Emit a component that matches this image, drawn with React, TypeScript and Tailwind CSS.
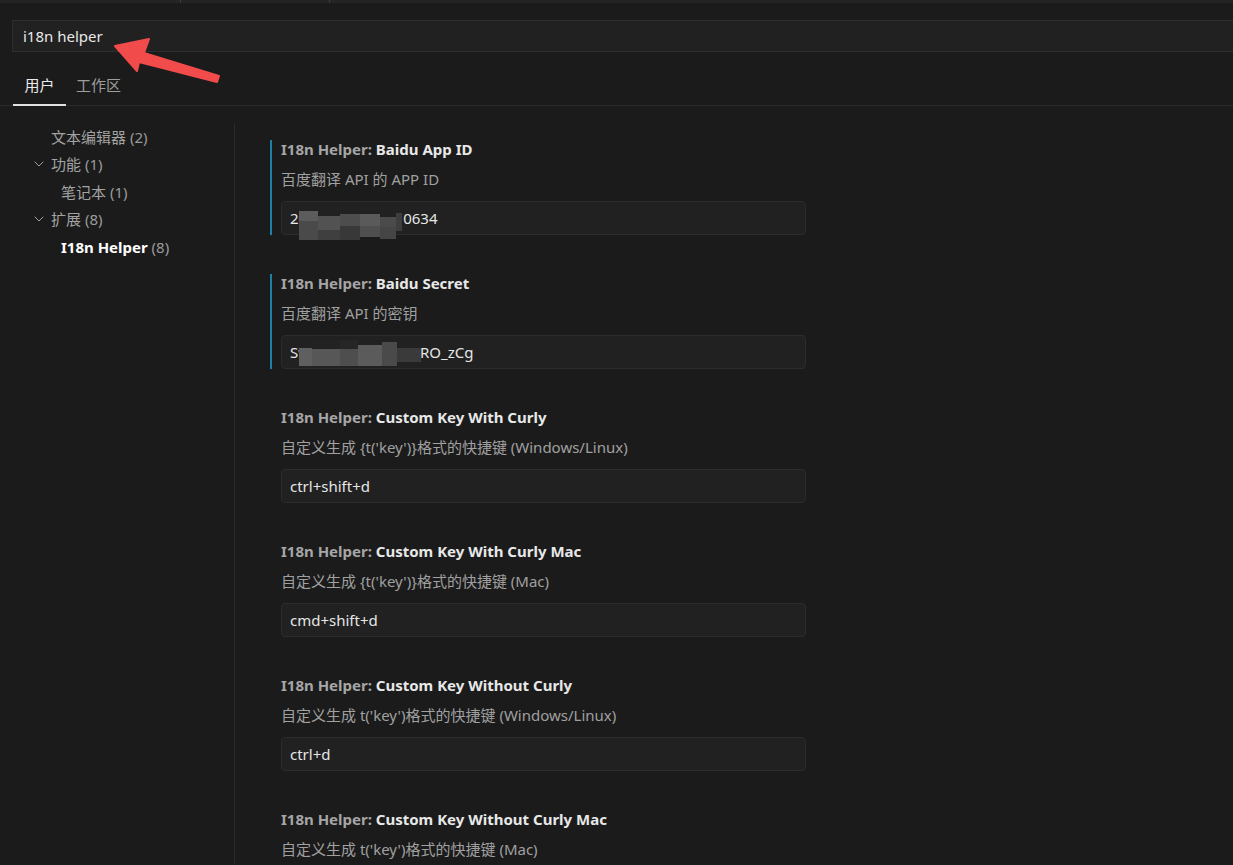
import { ChevronDown } from "lucide-react";

const font = { fontFamily: '"Noto Sans", "Noto Sans CJK SC", sans-serif' };

interface Setting {
  name: string;
  desc: string;
  value?: string;
  focused?: boolean;
  masked?: "id" | "secret";
}

const settings: Setting[] = [
  { name: "Baidu App ID", desc: "百度翻译 API 的 APP ID", value: "20", focused: true, masked: "id" },
  { name: "Baidu Secret", desc: "百度翻译 API 的密钥", value: "Sw", focused: true, masked: "secret" },
  { name: "Custom Key With Curly", desc: "自定义生成 {t('key')}格式的快捷键 (Windows/Linux)", value: "ctrl+shift+d" },
  { name: "Custom Key With Curly Mac", desc: "自定义生成 {t('key')}格式的快捷键 (Mac)", value: "cmd+shift+d" },
  { name: "Custom Key Without Curly", desc: "自定义生成 t('key')格式的快捷键 (Windows/Linux)", value: "ctrl+d" },
  { name: "Custom Key Without Curly Mac", desc: "自定义生成 t('key')格式的快捷键 (Mac)" },
];

function Mosaic({ kind }: { kind: "id" | "secret" }) {
  if (kind === "id") {
    return (
      <div className="absolute left-[17px] top-[9px] flex">
        <div className="flex flex-col"><div className="w-[19px] h-[10px] bg-[#5c5c5c]" /><div className="w-[19px] h-[19px] bg-[#4a4a4a]" /></div>
        <div className="flex flex-col pt-[5px]"><div className="w-[22px] h-[14px] bg-[#525252]" /><div className="w-[22px] h-[10px] bg-[#3f3f3f]" /></div>
        <div className="flex flex-col pt-[3px]"><div className="w-[20px] h-[12px] bg-[#4d4d4d]" /><div className="w-[20px] h-[14px] bg-[#383838]" /></div>
        <div className="flex flex-col pt-[3px]"><div className="w-[20px] h-[12px] bg-[#5a5a5a]" /><div className="w-[20px] h-[11px] bg-[#4f4f4f]" /></div>
        <div className="flex flex-col pt-[6px]"><div className="w-[16px] h-[10px] bg-[#4b4b4b]" /><div className="w-[16px] h-[12px] bg-[#454545]" /></div>
        <div className="flex flex-col pt-[2px]"><div className="w-[6px] h-[18px] bg-[#3e3e3e]" /></div>
      </div>
    );
  }
  return (
    <div className="absolute left-[17px] top-[2px] flex">
      <div className="flex flex-col pt-[10px]"><div className="w-[13px] h-[18px] bg-[#5f5f5f]" /></div>
      <div className="flex flex-col pt-[2px]"><div className="w-[28px] h-[9px] bg-[#222]" /><div className="w-[28px] h-[17px] bg-[#575757]" /></div>
      <div className="flex flex-col pt-[2px]"><div className="w-[18px] h-[9px] bg-[#262626]" /><div className="w-[18px] h-[17px] bg-[#4e4e4e]" /></div>
      <div className="flex flex-col pt-[7px]"><div className="w-[24px] h-[21px] bg-[#5b5b5b]" /></div>
      <div className="flex flex-col pt-[4px]"><div className="w-[15px] h-[24px] bg-[#4a4a4a]" /></div>
      <div className="flex flex-col pt-[10px]"><div className="w-[24px] h-[14px] bg-[#3a3a3a]" /></div>
    </div>
  );
}

function SettingItem({ s }: { s: Setting }) {
  return (
    <div className={`border-l-2 pl-[9px] ${s.focused ? "border-[#1b81a8]" : "border-transparent"}`}>
      <div className="text-[15px] leading-[18px] font-bold whitespace-nowrap">
        <span className="text-[#a6a6a6]">I18n Helper: </span>
        <span className="text-[#e8e8e8]">{s.name}</span>
      </div>
      <div className="mt-[11px] text-[15px] leading-[20px] text-[#a0a0a0] whitespace-nowrap">{s.desc}</div>
      {s.value !== undefined && (
        <div className="relative mt-[12px] w-[525px] h-[34px] bg-[#212121] border border-[#2c2c2c] rounded-sm flex items-center pl-[8px] text-[15px] text-[#e6e6e6]">
          {s.masked === "id" && <span>20<span className="inline-block w-[96px]" />0634</span>}
          {s.masked === "secret" && <span>Sw<span className="inline-block w-[110px]" />RO_zCg</span>}
          {!s.masked && s.value}
          {s.masked && <Mosaic kind={s.masked} />}
        </div>
      )}
    </div>
  );
}

function TreeRow({ label, count, indent, chevron, active }: { label: string; count: number; indent: number; chevron?: boolean; active?: boolean }) {
  return (
    <div className="h-[27.5px] flex items-center text-[15px] whitespace-nowrap" style={{ paddingLeft: indent }}>
      {chevron && <ChevronDown className="w-[16px] h-[16px] text-[#a0a0a0] mr-[4px] -ml-[20px]" strokeWidth={1.5} />}
      <span className={active ? "text-white font-bold" : "text-[#a3a3a3]"}>{label}</span>
      <span className="text-[#9a9a9a]">&nbsp;({count})</span>
    </div>
  );
}

export default function App() {
  return (
    <div className="relative w-[1233px] h-[865px] overflow-hidden bg-[#1b1b1b]" style={font}>
      <div className="h-[3px] bg-[#242424] flex">
        <div className="w-[181px] border-r border-[#3a3a3a]" />
        <div className="w-[149px] border-r border-[#3a3a3a]" />
      </div>

      <div className="pl-[12px] pt-[17px]">
        <div className="h-[32px] bg-[#212121] border border-[#2e2e2e] border-r-0 flex items-center pl-[10px] text-[15px] text-[#e8e8e8]">
          <span className="mt-[1px]">i18n helper</span>
        </div>
      </div>

      <div className="mt-[17px] border-b border-[#2b2b2b] flex pl-[13px] h-[37px]">
        <div className="w-[53px] border-b-2 border-[#e0e0e0] flex justify-center pt-[5px] text-[15px] text-[#eaeaea] -mb-[1px]">用户</div>
        <div className="ml-[10px] pt-[5px] text-[15px] text-[#9d9d9d]">工作区</div>
      </div>

      <div className="flex">
        <div className="w-[234px] pt-[17px] shrink-0">
          <TreeRow label="文本编辑器" count={2} indent={51} />
          <TreeRow label="功能" count={1} indent={51} chevron />
          <TreeRow label="笔记本" count={1} indent={61} />
          <TreeRow label="扩展" count={8} indent={51} chevron />
          <TreeRow label="I18n Helper" count={8} indent={61} active />
        </div>
        <div className="mt-[17px] border-l border-[#2a2a2a] h-[760px]" />
        <div className="pl-[35px] pt-[34px] flex flex-col gap-[39px]">
          {settings.map((s) => (
            <SettingItem key={s.name} s={s} />
          ))}
        </div>
      </div>

      <svg className="absolute left-0 top-0 pointer-events-none" width="260" height="110">
        <polygon
          points="115,46 149,39 144,53 219,76 217,82 139,62 137,71"
          fill="#f24b4b"
          stroke="#f24b4b"
          strokeWidth="2"
          strokeLinejoin="round"
        />
      </svg>
    </div>
  );
}
